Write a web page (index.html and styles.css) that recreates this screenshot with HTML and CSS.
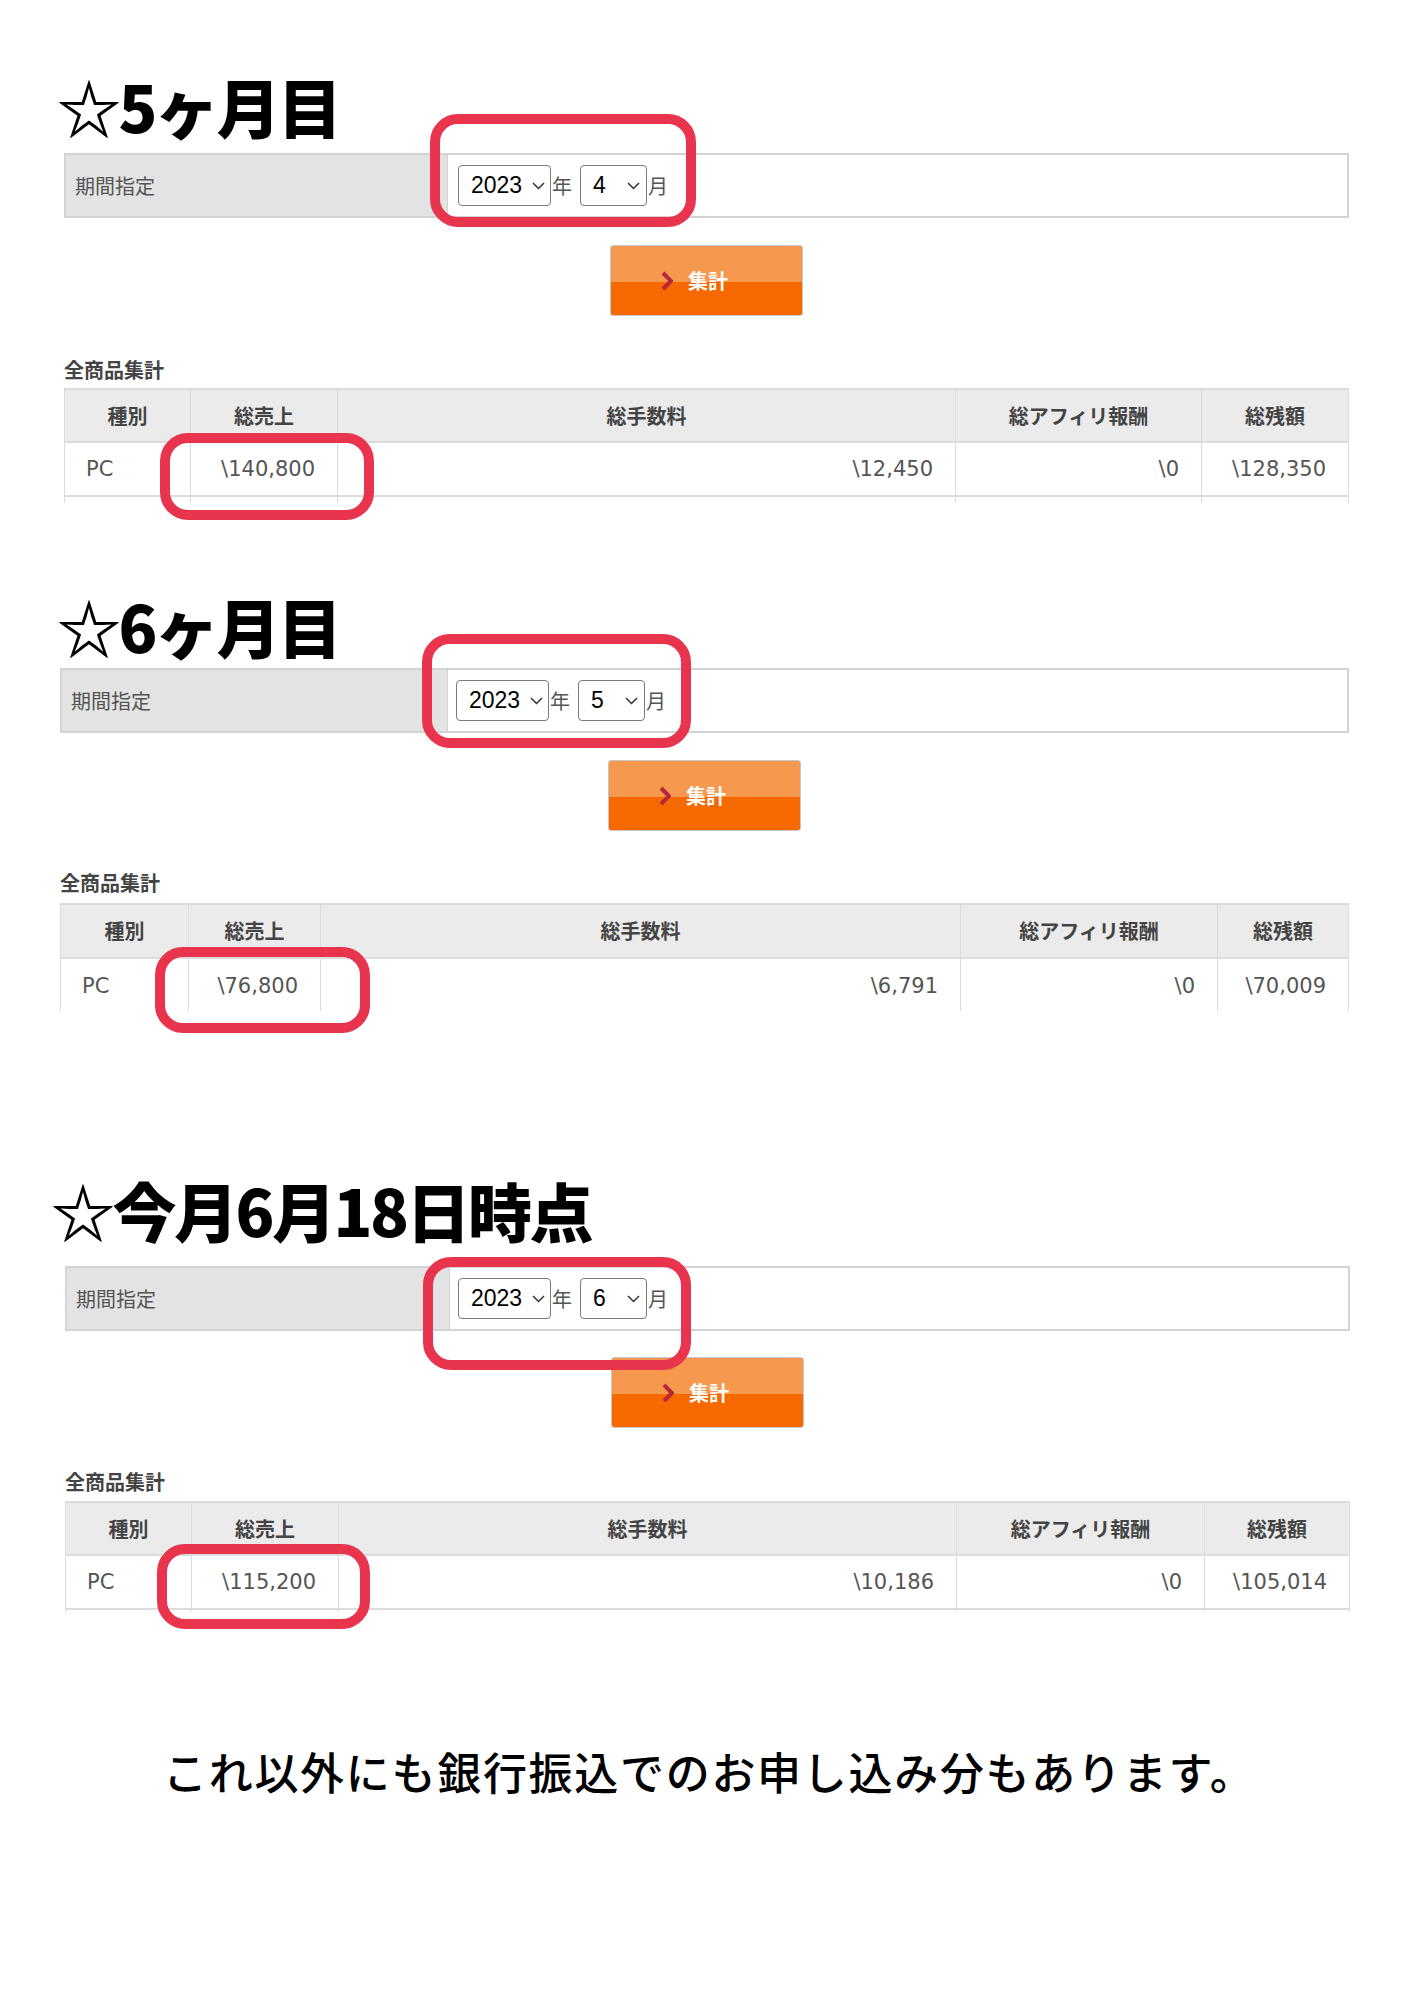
FILE: index.html
```html
<!DOCTYPE html>
<html lang="ja">
<head>
<meta charset="utf-8">
<title>集計</title>
<link rel="stylesheet" href="styles.css">
</head>
<body>
<div class="page">

  <section class="sec s1">
    <h2 class="title">☆5ヶ月目</h2>
    <div class="filter">
      <div class="flabel">期間指定</div>
      <div class="fval">
        <div class="sel sel-y"><span>2023</span><svg class="dd" viewBox="0 0 13 8"><polyline points="1,1 6.5,6.5 12,1"/></svg></div>
        <span class="unit">年</span>
        <div class="sel sel-m"><span>4</span><svg class="dd" viewBox="0 0 13 8"><polyline points="1,1 6.5,6.5 12,1"/></svg></div>
        <span class="unit">月</span>
      </div>
    </div>
    <div class="btnrow"><div class="btn"><svg class="arr" viewBox="0 0 12 20"><polyline points="2,2 10,10 2,18"/></svg><span>集計</span></div></div>
    <div class="caption">全商品集計</div>
    <div class="twrap">
      <table class="tbl">
        <colgroup><col class="c1"><col class="c2"><col class="c3"><col class="c4"><col class="c5"></colgroup>
        <thead><tr><th>種別</th><th>総売上</th><th>総手数料</th><th>総アフィリ報酬</th><th>総残額</th></tr></thead>
        <tbody>
          <tr><td class="l">PC</td><td>\140,800</td><td>\12,450</td><td>\0</td><td>\128,350</td></tr>
          <tr class="stub"><td></td><td></td><td></td><td></td><td></td></tr>
        </tbody>
      </table>
    </div>
  </section>

  <section class="sec s2">
    <h2 class="title">☆6ヶ月目</h2>
    <div class="filter">
      <div class="flabel">期間指定</div>
      <div class="fval">
        <div class="sel sel-y"><span>2023</span><svg class="dd" viewBox="0 0 13 8"><polyline points="1,1 6.5,6.5 12,1"/></svg></div>
        <span class="unit">年</span>
        <div class="sel sel-m"><span>5</span><svg class="dd" viewBox="0 0 13 8"><polyline points="1,1 6.5,6.5 12,1"/></svg></div>
        <span class="unit">月</span>
      </div>
    </div>
    <div class="btnrow"><div class="btn"><svg class="arr" viewBox="0 0 12 20"><polyline points="2,2 10,10 2,18"/></svg><span>集計</span></div></div>
    <div class="caption">全商品集計</div>
    <div class="twrap">
      <table class="tbl">
        <colgroup><col class="c1"><col class="c2"><col class="c3"><col class="c4"><col class="c5"></colgroup>
        <thead><tr><th>種別</th><th>総売上</th><th>総手数料</th><th>総アフィリ報酬</th><th>総残額</th></tr></thead>
        <tbody>
          <tr><td class="l">PC</td><td>\76,800</td><td>\6,791</td><td>\0</td><td>\70,009</td></tr>
        </tbody>
      </table>
    </div>
  </section>

  <section class="sec s3">
    <h2 class="title">☆今月6月18日時点</h2>
    <div class="filter">
      <div class="flabel">期間指定</div>
      <div class="fval">
        <div class="sel sel-y"><span>2023</span><svg class="dd" viewBox="0 0 13 8"><polyline points="1,1 6.5,6.5 12,1"/></svg></div>
        <span class="unit">年</span>
        <div class="sel sel-m"><span>6</span><svg class="dd" viewBox="0 0 13 8"><polyline points="1,1 6.5,6.5 12,1"/></svg></div>
        <span class="unit">月</span>
      </div>
    </div>
    <div class="btnrow"><div class="btn"><svg class="arr" viewBox="0 0 12 20"><polyline points="2,2 10,10 2,18"/></svg><span>集計</span></div></div>
    <div class="caption">全商品集計</div>
    <div class="twrap">
      <table class="tbl">
        <colgroup><col class="c1"><col class="c2"><col class="c3"><col class="c4"><col class="c5"></colgroup>
        <thead><tr><th>種別</th><th>総売上</th><th>総手数料</th><th>総アフィリ報酬</th><th>総残額</th></tr></thead>
        <tbody>
          <tr><td class="l">PC</td><td>\115,200</td><td>\10,186</td><td>\0</td><td>\105,014</td></tr>
          <tr class="stub"><td></td><td></td><td></td><td></td><td></td></tr>
        </tbody>
      </table>
    </div>
  </section>

  <p class="note">これ以外にも銀行振込でのお申し込み分もあります。</p>

  <div class="ring r1"></div>
  <div class="ring r2"></div>
  <div class="ring r3"></div>
  <div class="ring r4"></div>
  <div class="ring r5"></div>
  <div class="ring r6"></div>
</div>
</body>
</html>
```
FILE: styles.css
```css
* { box-sizing: border-box; }
body { margin: 0; background: #fff; }

.page {
  position: relative;
  width: 1414px;
  height: 2000px;
  padding-top: 73px;
  overflow: hidden;
  background: #fff;
}

/* sections */
.s1 { margin-left: 64px; width: 1285px; }
.s2 { margin: 90px 0 0 60px; width: 1289px; }
.s3 { margin: 166px 0 0 65px; width: 1285px; }

.title {
  margin: 0;
  font: 900 64px/64px "Noto Sans CJK JP", sans-serif;
  letter-spacing: -2.5px;
  color: #000;
  white-space: nowrap;
}
.s1 .title { margin-left: -7px; }
.s2 .title { margin-left: -3px; }
.s3 .title { margin-left: -14px; }

/* filter box */
.filter {
  display: flex;
  height: 65px;
  border: 2px solid #d3d3d3;
  background: #fff;
}
.s1 .filter { margin-top: 16px; }
.s2 .filter { margin-top: 11px; }
.s3 .filter { margin-top: 25px; }

.flabel {
  width: 382px;
  background: #e3e3e3;
  border-right: 1px solid #d3d3d3;
  display: flex;
  align-items: center;
  padding-left: 9px;
  font: 400 20px/1 "Noto Sans CJK JP", sans-serif;
  color: #555;
}
.s2 .flabel { width: 386px; }
.s3 .flabel { width: 383px; }

.fval {
  display: flex;
  align-items: center;
  padding-left: 10px;
}
.s2 .fval { padding-left: 8px; }
.s3 .fval { padding-left: 8px; }

.sel {
  height: 41px;
  border: 1px solid #7a7a7a;
  border-radius: 4px;
  background: #fff;
  display: flex;
  align-items: center;
  padding-left: 12px;
  font: 400 23px/1 "Liberation Sans", Arial, sans-serif;
  color: #000;
}
.sel-y { width: 93px; }
.sel-m { width: 67px; }
.dd {
  width: 13px;
  height: 8px;
  margin-left: auto;
  margin-right: 5px;
  fill: none;
  stroke: #333;
  stroke-width: 1.5;
}
.sel-m .dd { margin-right: 6px; }

.unit {
  font: 400 20px/1 "Noto Sans CJK JP", sans-serif;
  color: #555;
  margin: 0 8px 0 1px;
}

/* button */
.btnrow { display: flex; justify-content: center; margin-top: 27px; }
.s3 .btnrow { margin-top: 26px; }
.btn {
  width: 193px;
  height: 71px;
  border: 1px solid #c6c6c6;
  border-radius: 3px;
  background: linear-gradient(#f7984f 0, #f7984f 52%, #f66900 52%, #f66900 100%);
  display: flex;
  align-items: center;
  justify-content: center;
  gap: 15px;
  padding-right: 24px;
  color: #fff;
  font: 700 20px/1 "Noto Sans CJK JP", sans-serif;
}
.arr {
  width: 12px;
  height: 20px;
  fill: none;
  stroke: #b8263c;
  stroke-width: 4;
}

/* caption */
.caption {
  margin-top: 44px;
  font: 700 20px/20px "Noto Sans CJK JP", sans-serif;
  color: #444;
}
.s2 .caption { margin-top: 42px; }

/* table */
.twrap { overflow: hidden; margin-top: 8px; height: 115px; }
.s2 .twrap { margin-top: 10px; height: 108px; }
.s3 .twrap { margin-top: 9px; height: 111px; }

.tbl {
  width: 100%;
  border-collapse: separate;
  border-spacing: 0;
  table-layout: fixed;
  border-left: 1px solid #dcdcdc;
}
.s1 .c1, .s3 .c1 { width: 126px; }
.s1 .c2, .s3 .c2 { width: 147px; }
.s1 .c3, .s3 .c3 { width: 618px; }
.s1 .c4 { width: 246px; }
.s1 .c5 { width: 147px; }
.s3 .c4 { width: 248px; }
.s3 .c5 { width: 145px; }
.s2 .c1 { width: 128px; }
.s2 .c2 { width: 132px; }
.s2 .c3 { width: 640px; }
.s2 .c4 { width: 257px; }
.s2 .c5 { width: 131px; }

.tbl th, .tbl td { border-right: 1px solid #dcdcdc; padding: 0; }
.tbl thead tr { height: 55px; }
.s2 .tbl thead tr { height: 56px; }
.tbl tbody tr { height: 54px; }
.tbl th {
  background: #ebebeb;
  border-top: 2px solid #dcdcdc;
  border-bottom: 2px solid #dcdcdc;
  font: 700 20px/1 "Noto Sans CJK JP", sans-serif;
  color: #444;
  text-align: center;
}
.tbl td {
  border-bottom: 2px solid #dcdcdc;
  font: 400 21px/1 "DejaVu Sans", sans-serif;
  color: #555;
  text-align: right;
  padding: 0 22px;
  white-space: nowrap;
}
.s2 .tbl td { border-bottom: none; }
.tbl td.l { text-align: left; padding-left: 21px; }
.tbl tr.stub { height: 20px; }
.tbl tr.stub td { border-bottom: none; }

/* note */
.note {
  margin: 137px 0 0 163px;
  font: 500 44px/44px "Noto Sans CJK JP", sans-serif;
  letter-spacing: 1.7px;
  color: #000;
  white-space: nowrap;
}

/* annotation rings */
.ring {
  position: absolute;
  border: 10px solid #e8344d;
  border-radius: 28px;
}
.r1 { left: 430px; top: 114px; width: 266px; height: 113px; }
.r2 { left: 160px; top: 433px; width: 214px; height: 87px; }
.r3 { left: 422px; top: 634px; width: 269px; height: 114px; }
.r4 { left: 155px; top: 947px; width: 215px; height: 86px; }
.r5 { left: 423px; top: 1257px; width: 268px; height: 113px; }
.r6 { left: 157px; top: 1544px; width: 213px; height: 85px; }
```
